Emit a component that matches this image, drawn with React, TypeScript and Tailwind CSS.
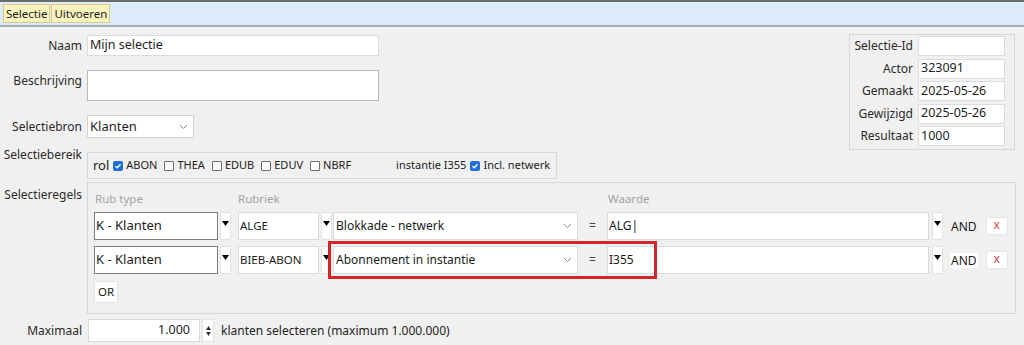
import React from 'react';

const ff = "font-['Noto_Sans',sans-serif]";

function DropArrow({ h = 28 }: { h?: number }) {
  return (
    <div
      className="w-[11px] bg-white border border-[#e3e3e3] rounded-[2px] flex justify-center pt-[8px]"
      style={{ height: h }}
    >
      <svg width="7" height="5" viewBox="0 0 7 5">
        <path d="M0 0 L7 0 L3.5 5 Z" fill="#000" />
      </svg>
    </div>
  );
}

function Chevron() {
  return (
    <svg width="9" height="6" viewBox="0 0 9 6" className="shrink-0">
      <path d="M1 1 L4.5 4.5 L8 1" fill="none" stroke="#8a8a8a" strokeWidth="1" />
    </svg>
  );
}

function Check({ on }: { on?: boolean }) {
  if (on) {
    return (
      <span className="inline-flex w-[10px] h-[10px] rounded-[2px] bg-[#1f6fd6] items-center justify-center">
        <svg width="8" height="8" viewBox="0 0 8 8">
          <path d="M1.5 4.2 L3.2 5.8 L6.5 2.2" fill="none" stroke="#fff" strokeWidth="1.3" />
        </svg>
      </span>
    );
  }
  return <span className="inline-block w-[10px] h-[10px] rounded-[1px] bg-white border border-[#6e6e6e]" />;
}

function RuleRow({ rub, rubriek, oms, waarde, andBox }: { rub: string; rubriek: string; oms: string; waarde: string; andBox?: boolean }) {
  return (
    <div className="flex items-start h-[28px]">
      <div className="w-[124px] h-[28px] bg-white border border-[#7d7d7d] flex items-center pl-[1px] text-[13px] text-[#1b1b1b]">
        {rub}
      </div>
      <div className="ml-[2px]">
        <DropArrow />
      </div>
      <div className="ml-[7px] w-[81px] h-[28px] bg-white border border-[#dadada] flex items-center pl-[1px] text-[11.5px] text-[#1b1b1b]">
        {rubriek}
      </div>
      <div className="ml-[2px]">
        <DropArrow />
      </div>
      <div className="ml-[1px] w-[245px] h-[28px] bg-white border border-[#dadada] flex items-center justify-between pl-[2px] pr-[5px] text-[12px] text-[#1b1b1b]">
        <span>{oms}</span>
        <Chevron />
      </div>
      <div className="w-[29px] h-[28px] flex items-center justify-center text-[12px] text-[#444]">=</div>
      <div className="w-[322px] h-[28px] bg-white border border-[#dadada] flex items-center pl-[1px] text-[12px] text-[#1b1b1b]">
        {waarde}
      </div>
      <div className="ml-[3px]">
        <DropArrow />
      </div>
      <div className="ml-[7px] h-[28px] flex items-center">
        <span className={`text-[12px] leading-[15px] text-[#1b1b1b] px-[1px] ${andBox ? 'bg-white' : ''}`}>AND</span>
      </div>
      <div className="ml-[8px] mt-[5px] w-[22px] h-[18px] bg-white border border-[#e6e6e6] rounded-[2px] flex items-center justify-center text-[12px] text-[#d2494a] leading-none pb-[2px]">
        x
      </div>
    </div>
  );
}

export default function App() {
  return (
    <div className={`w-[1024px] h-[345px] overflow-hidden bg-[#f0f0f0] text-[#1e1e1e] whitespace-nowrap ${ff}`}>
      {/* toolbar */}
      <div className="h-[27px] bg-[#dcebfb] border-t-2 border-[#6b6b6b] border-b-2 border-b-[#a9adb3] flex items-center pl-[3px]">
        <div className="flex">
          <button className="h-[19px] px-[2px] bg-[#fbf3bd] border border-[#d8cb8a] text-[11.5px] leading-none text-[#1e1e1e]">Selectie</button>
          <button className="h-[19px] px-[2px] ml-[1px] bg-[#fbf3bd] border border-[#d8cb8a] text-[11.5px] leading-none text-[#1e1e1e]">Uitvoeren</button>
        </div>
      </div>

      {/* upper part */}
      <div className="flex justify-between items-start pt-[8px] pr-[9px] h-[126px]">
        <div className="flex flex-col text-[12px]">
          <div className="flex items-center h-[21px]">
            <div className="w-[82px] text-right text-[#2a2a2a]">Naam</div>
            <div className="ml-[5px] w-[292px] h-[21px] bg-white border border-[#dcdcdc] flex items-center pl-[2px] text-[12.5px]">Mijn selectie</div>
          </div>
          <div className="flex items-start mt-[14px]">
            <div className="w-[82px] text-right text-[#2a2a2a] pt-[2px]">Beschrijving</div>
            <div className="ml-[5px] w-[292px] h-[31px] bg-white border border-[#b9b9b9]" />
          </div>
          <div className="flex items-center mt-[14px] h-[23px]">
            <div className="w-[82px] text-right text-[#2a2a2a]">Selectiebron</div>
            <div className="ml-[5px] w-[107px] h-[23px] bg-white border border-[#d2d2d2] flex items-center justify-between pl-[2px] pr-[5px] text-[13px]">
              <span>Klanten</span>
              <Chevron />
            </div>
          </div>
        </div>

        <div className="mt-[-1px] w-[166px] border border-[#d6d6d6] pt-[1px] pb-[3px] pl-[4px] pr-[9px] flex flex-col gap-[2.5px] text-[12px]">
          {[
            ['Selectie-Id', ''],
            ['Actor', '323091'],
            ['Gemaakt', '2025-05-26'],
            ['Gewijzigd', '2025-05-26'],
            ['Resultaat', '1000'],
          ].map(([l, v]) => (
            <div key={l} className="flex items-center h-[20px]">
              <div className="flex-1 text-right text-[#2a2a2a]">{l}</div>
              <div className="ml-[5px] w-[87px] h-[20px] bg-white border border-[#dcdcdc] flex items-center pl-[2px] text-[12.5px]">{v}</div>
            </div>
          ))}
        </div>
      </div>

      {/* selectiebereik */}
      <div className="flex items-start text-[12px] h-[32px]">
        <div className="w-[82px] text-right text-[#2a2a2a] mt-[-7px]">Selectiebereik</div>
        <div className="ml-[5px] mt-[-1px] w-[470px] h-[27px] border border-[#d6d6d6] flex items-center pl-[5px] text-[11px] text-[#222]">
          <span className="text-[13px] mt-[1px]">rol</span>
          <span className="ml-[4px] flex items-center gap-[3px]"><Check on />ABON</span>
          <span className="ml-[7px] flex items-center gap-[3px]"><Check />THEA</span>
          <span className="ml-[7px] flex items-center gap-[3px]"><Check />EDUB</span>
          <span className="ml-[7px] flex items-center gap-[3px]"><Check />EDUV</span>
          <span className="ml-[7px] flex items-center gap-[3px]"><Check />NBRF</span>
          <span className="ml-[45px]">instantie I355</span>
          <span className="ml-[4px] flex items-center gap-[3px]"><Check on />Incl. netwerk</span>
        </div>
      </div>

      {/* selectieregels */}
      <div className="flex items-start text-[12px] mt-[-3px]">
        <div className="w-[82px] text-right text-[#2a2a2a] mt-[4px]">Selectieregels</div>
        <div className="relative ml-[5px] w-[929px] h-[132px] border border-[#d6d6d6] pl-[6px] pt-[8px]">
          <div className="flex text-[11.5px] text-[#a3a3a3] h-[16px] items-center">
            <span className="w-[144px] pl-[1px]">Rub type</span>
            <span className="w-[370px]">Rubriek</span>
            <span>Waarde</span>
          </div>
          <div className="mt-[5px] flex flex-col gap-[6px]">
            <RuleRow rub="K - Klanten" rubriek="ALGE" oms="Blokkade - netwerk" waarde="ALG|" />
            <RuleRow rub="K - Klanten" rubriek="BIEB-ABON" oms="Abonnement in instantie" waarde="I355" andBox />
          </div>
          <button className="mt-[7px] w-[24px] h-[22px] bg-white border border-[#e3e3e3] rounded-[2px] text-[11.5px] text-[#222]">OR</button>
          {/* annotation */}
          <div className="absolute left-[240px] top-[58px] w-[329px] h-[38px] border-[3px] border-[#d3262c]" />
        </div>
      </div>

      {/* maximaal */}
      <div className="flex items-center mt-[5px] text-[12px]">
        <div className="w-[82px] text-right text-[#2a2a2a]">Maximaal</div>
        <div className="ml-[6px] w-[112px] h-[23px] bg-white border border-[#d8d8d8] flex items-center justify-end pr-[9px] text-[12.5px]">1.000</div>
        <div className="ml-[2px] w-[12px] h-[23px] flex flex-col justify-center items-center gap-[2px] bg-white border border-[#e4e4e4]">
          <svg width="5" height="4" viewBox="0 0 5 4"><path d="M0 4 L5 4 L2.5 0 Z" fill="#333" /></svg>
          <svg width="5" height="4" viewBox="0 0 5 4"><path d="M0 0 L5 0 L2.5 4 Z" fill="#333" /></svg>
        </div>
        <span className="ml-[7px] text-[12px] text-[#222]">klanten selecteren (maximum 1.000.000)</span>
      </div>
    </div>
  );
}
